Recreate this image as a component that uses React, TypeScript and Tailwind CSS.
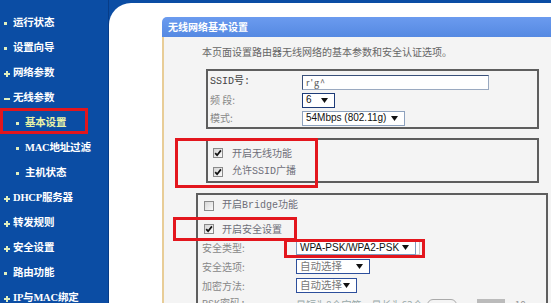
import React from "react";

const CJK = '"Noto Sans CJK SC", "Noto Sans", sans-serif';
const MONO_CJK = '"Liberation Mono", "Noto Sans CJK SC", monospace';
const ARIAL = '"Liberation Sans", Arial, sans-serif';

type Item = { t: string; b: "dot" | "plus" | "minus"; sub?: boolean; active?: boolean };

const items: Item[] = [
  { t: "运行状态", b: "dot" },
  { t: "设置向导", b: "dot" },
  { t: "网络参数", b: "plus" },
  { t: "无线参数", b: "minus" },
  { t: "基本设置", b: "dot", sub: true, active: true },
  { t: "MAC地址过滤", b: "dot", sub: true },
  { t: "主机状态", b: "dot", sub: true },
  { t: "DHCP服务器", b: "plus" },
  { t: "转发规则", b: "plus" },
  { t: "安全设置", b: "plus" },
  { t: "路由功能", b: "dot" },
  { t: "IP与MAC绑定", b: "plus" },
];

function Bullet({ b }: { b: Item["b"] }) {
  if (b === "dot") return <span className="block w-[3px] h-[3px] bg-[#dfeec0]" />;
  if (b === "minus") return <span className="block w-[6px] h-[2px] bg-[#dfeec0]" />;
  return (
    <svg width="6" height="6" viewBox="0 0 6 6" className="block">
      <rect x="0" y="2" width="6" height="2" fill="#dfeec0" />
      <rect x="2" y="0" width="2" height="6" fill="#dfeec0" />
    </svg>
  );
}

function Arrow() {
  return (
    <svg width="7" height="5" viewBox="0 0 7 5" className="block shrink-0">
      <polygon points="0,0 7,0 3.5,5" fill="#111" />
    </svg>
  );
}

function Cb({ checked }: { checked?: boolean }) {
  return (
    <span className="w-[10px] h-[10px] shrink-0 border border-[#8a8a8a] bg-gradient-to-br from-[#d6d6d6] to-[#fbfbfb] flex items-center justify-center">
      {checked && (
        <svg width="8" height="8" viewBox="0 0 8 8">
          <path d="M1.2 4.2 L3.1 6.2 L6.9 1.4" stroke="#111" strokeWidth="1.7" fill="none" />
        </svg>
      )}
    </span>
  );
}

function Sel({ w, text, border, arial, gray, tail }: { w: string; text: string; border: string; arial?: boolean; gray?: boolean; tail?: boolean }) {
  return (
    <div className={`flex items-center h-[15px] shrink-0 ${w}`}>
      <div className={`flex items-center justify-between h-full flex-1 bg-white border ${border} pl-[3px] pr-[6px]`}>
        <span
          className={`whitespace-nowrap leading-none ${arial ? "text-[10px]" : "text-[10.5px]"} ${gray ? "text-[#777]" : "text-[#111]"}`}
          style={{ fontFamily: arial ? ARIAL : CJK }}
        >
          {text}
        </span>
        <Arrow />
      </div>
      {tail && <span className="w-[4px] h-full bg-white border border-[#ccc] border-l-0" />}
    </div>
  );
}

export default function App() {
  return (
    <div className="relative w-[551px] h-[303px] overflow-hidden bg-[#0b4da4] flex" style={{ fontFamily: CJK }}>
      {/* Sidebar */}
      <div className="w-[109px] shrink-0 border-r border-[#073c87] pt-[11px]">
        {items.map((it) => (
          <div key={it.t} className={`h-[25px] flex items-center ${it.sub ? "pl-[16px]" : "pl-[4px]"}`}>
            <span className="w-[9px] flex items-center">
              <Bullet b={it.b} />
            </span>
            <span
              className={`whitespace-nowrap text-[10.5px] leading-none font-bold tracking-[-0.2px] ${it.active ? "text-[#eaf3a6]" : "text-white"}`}
              style={{ fontFamily: '"Liberation Serif", "Noto Sans CJK SC", serif' }}
            >
              {it.t}
            </span>
          </div>
        ))}
      </div>

      {/* Main */}
      <div className="flex-1 pt-[3px]">
        <div className="h-full bg-white rounded-tl-[22px] pl-[53px] pt-[14px]">
          <div className="flex flex-col h-full">
            <div className="h-[20px] shrink-0 bg-gradient-to-b from-[#6b9bef] to-[#5589e2] rounded-tl-[5px] flex items-center pl-[6px]">
              <span className="text-[10px] font-bold text-white leading-none">无线网络基本设置</span>
            </div>
            <div className="flex-1 border-l-2 border-[#e8cd97] bg-[#f4f4f4]">
              <div className="pl-[38px] pt-[9px] text-[10px] leading-[12px] text-[#666] whitespace-nowrap">
                本页面设置路由器无线网络的基本参数和安全认证选项。
              </div>

              {/* Box 1 */}
              <div className="ml-[42px] mr-[12px] mt-[11px] border-2 border-[#5e5e5e] pt-[2px] pl-[2px]">
                <div className="h-[18px] flex items-center">
                  <span className="w-[92px] text-[10px] leading-none text-[#444]" style={{ fontFamily: MONO_CJK }}>SSID号:</span>
                  <div className="w-[187px] h-[15px] bg-white border border-[#9aa9c0] border-t-[#39507a] border-l-[#39507a] flex items-center pl-[3px]">
                    <span className="text-[9px] text-[#555] leading-none tracking-[1px]">r'g^</span>
                  </div>
                </div>
                <div className="h-[18px] flex items-center">
                  <span className="w-[92px] text-[10px] leading-none text-[#888]">频 段:</span>
                  <Sel w="w-[33px]" text="6" border="border-[#1d3b78]" arial />
                </div>
                <div className="h-[18px] flex items-center">
                  <span className="w-[92px] text-[10px] leading-none text-[#888]">模式:</span>
                  <Sel w="w-[103px]" text="54Mbps (802.11g)" border="border-[#8ea2be]" arial />
                </div>
              </div>

              {/* Box 2 */}
              <div className="ml-[42px] mr-[12px] mt-[9px] border-2 border-[#5e5e5e] pt-[3px] pl-[5px] pb-[0px]">
                <div className="h-[19px] flex items-center gap-[9px]">
                  <Cb checked />
                  <span className="text-[10px] leading-none text-[#6e6e78]">开启无线功能</span>
                </div>
                <div className="h-[19px] flex items-center gap-[9px]">
                  <Cb checked />
                  <span className="text-[10px] leading-none text-[#6e6e78]" style={{ fontFamily: MONO_CJK }}>允许SSID广播</span>
                </div>
              </div>

              {/* Box 3 */}
              <div className="ml-[32px] mr-[3px] mt-[10px] border-2 border-[#5e5e5e] pl-[6px]">
                <div className="h-[21px] flex items-center gap-[8px]">
                  <Cb />
                  <span className="text-[10px] leading-none text-[#6e6e78]" style={{ fontFamily: MONO_CJK }}>开启Bridge功能</span>
                </div>
                <div className="h-[22px] pt-[4px] flex items-center gap-[8px]">
                  <Cb checked />
                  <span className="text-[10px] leading-none text-[#6e6e78]">开启安全设置</span>
                </div>
                <div className="h-[19px] flex items-center -ml-[2px]">
                  <span className="w-[94px] text-[10px] leading-none text-[#888]">安全类型:</span>
                  <Sel w="w-[124px]" text="WPA-PSK/WPA2-PSK" border="border-[#7f9bc0]" arial tail />
                </div>
                <div className="h-[19px] flex items-center -ml-[2px]">
                  <span className="w-[94px] text-[10px] leading-none text-[#888]">安全选项:</span>
                  <Sel w="w-[74px]" text="自动选择" border="border-[#2d4f9c]" gray />
                </div>
                <div className="h-[19px] flex items-center -ml-[2px]">
                  <span className="w-[94px] text-[10px] leading-none text-[#888]">加密方法:</span>
                  <Sel w="w-[61px]" text="自动选择" border="border-[#2d4f9c]" gray />
                </div>
                <div className="h-[19px] flex items-center -ml-[2px] whitespace-nowrap">
                  <span className="w-[94px] shrink-0 text-[10px] leading-none text-[#888]" style={{ fontFamily: MONO_CJK }}>PSK密码:</span>
                  <span className="text-[10px] leading-none text-[#9aa]">最短为8个字符，最长为63个</span>
                  <span className="ml-[4px] w-[30px] h-[12px] shrink-0 rounded-full border border-[#aaa]" />
                  <span className="ml-[20px] w-[28px] h-[12px] shrink-0 bg-[#bbb]" />
                  <span className="ml-[10px] text-[10px] leading-none text-[#999]">10</span>
                </div>
              </div>
            </div>
          </div>
        </div>
      </div>

      {/* Red annotation boxes */}
      <div className="absolute left-0 top-[108px] w-[88px] h-[26px] border-[3px] border-[#e3161d]" />
      <div className="absolute left-[175px] top-[138px] w-[143px] h-[50px] border-[3px] border-[#e3161d]" />
      <div className="absolute left-[173px] top-[217px] w-[124px] h-[24px] border-[3px] border-[#e3161d]" />
      <div className="absolute left-[284px] top-[239px] w-[141px] h-[19px] border-[3px] border-[#e3161d]" />
    </div>
  );
}
